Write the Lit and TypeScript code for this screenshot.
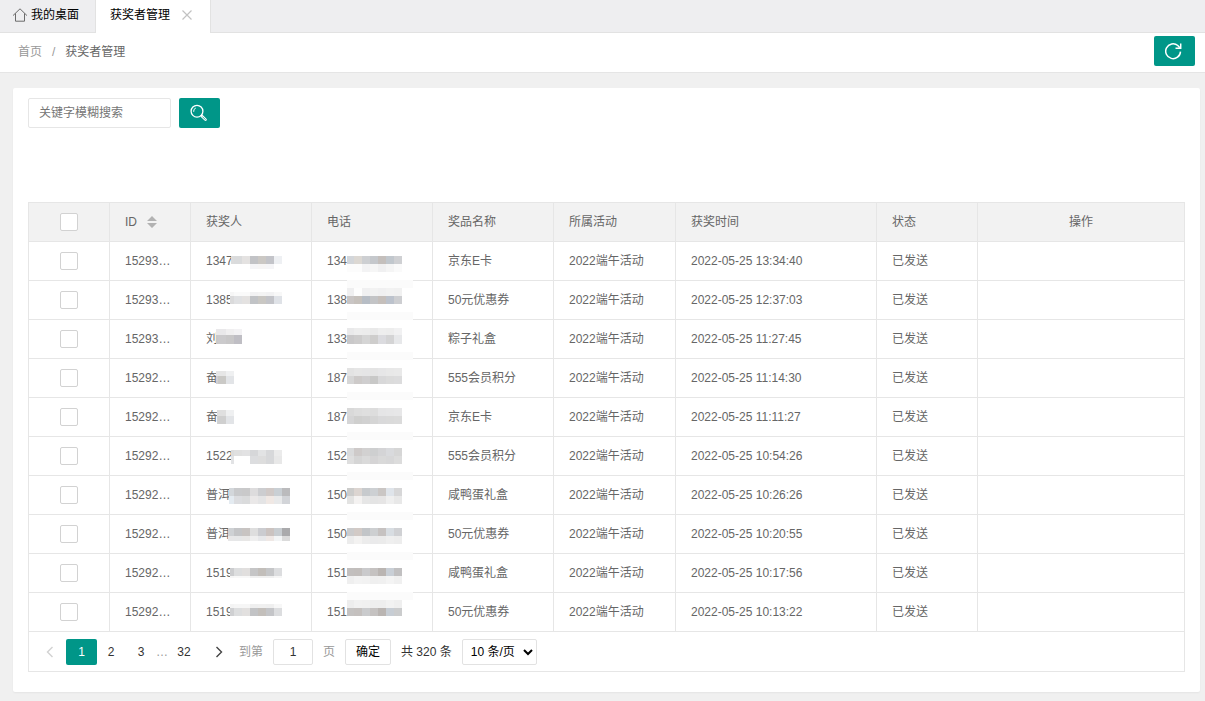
import { LitElement, html, svg, css, nothing } from "lit";
import { customElement, state } from "lit/decorators.js";

/** One horizontal band of masking blocks; "" leaves a gap. */
interface Band {
  y: number;
  h: number;
  fill: string[];
}

interface Mask {
  start: number;
  bands: Band[];
}

interface Winner {
  id: string;
  name: string;
  nameMask: Mask;
  phone: string;
  phoneMask: Mask;
  veil?: number;
  prize: string;
  time: string;
}

const BLOCK = 8;

const mask = (start: number, ...bands: [number, number, string][]): Mask => ({
  start,
  bands: bands.map(([y, h, list]) => ({
    y,
    h,
    fill: list.split(" ").map((c) => (c === "-" ? "" : "#" + c)),
  })),
});

const winners: Winner[] = [
  {
    id: "15293401", name: "1347", phone: "134", prize: "京东E卡", time: "2022-05-25 13:34:40", veil: 38,
    nameMask: mask(40, [14, 8, "dcdcdc dadbdc e4e2e1 c2c3c6 cbc8c4 c3c4c9 eef0f3"], [22, 5, "- - - f5f5f7 f6f5f5 f5f5f7 -"]),
    phoneMask: mask(35, [14, 8, "d3d6da dcd8d3 cdcfd2 c5c8cc c4bfbc c1c7cd cfd0d3"], [22, 8, "fcfcfc fcfcfc f3f3f4 f6f6f6 f0f0f1 f5f5f5 fafafa"]),
  },
  {
    id: "15293388", name: "1385", phone: "138", prize: "50元优惠券", time: "2022-05-25 12:37:03", veil: 31,
    nameMask: mask(39, [11, 4, "f6f6f6 fafafa fafafa f2f2f3 f4f4f4 f2f2f3 f8f8f8"], [15, 8, "dadadb e0e1e3 e4e2e1 c1c3c6 c9c7c3 c3c4c9 dfe2e7"]),
    phoneMask: mask(35, [7, 8, "efeff0 fdfdfd f0f0f1 f2f2f2 f0f0f1 f2f2f2 f1f1f1"], [15, 8, "c9c5c4 c6c1bc b7bdc5 c3c4c6 c5bfbb bcc2cc cdced1"]),
  },
  {
    id: "15293120", name: "刘", phone: "133", prize: "粽子礼盒", time: "2022-05-25 11:27:45", veil: 32,
    nameMask: mask(25, [9, 6, "e9e8ea e9e8ea f0eff0 f3f2f4"], [15, 9, "c9c8ca cbcacc c8c7c8 bfbec4"]),
    phoneMask: mask(35, [8, 7, "e9e9ea ededed ececec e9e9e9 eeeeee ededed f1f1f2"], [15, 9, "c9c8c9 cdcccc d5d5d5 cecdcc dbdbdf d4d4d5 e7e8ea"]),
  },
  {
    id: "15292987", name: "奋", phone: "187", prize: "555会员积分", time: "2022-05-25 11:14:30", veil: 33,
    nameMask: mask(25, [12, 5, "e6e6e7 e6e6e6 eff0f1"], [17, 8, "d2d1d3 cac9c6 e2e4e7"]),
    phoneMask: mask(35, [9, 8, "e3e3e3 e6e6e6 e5e5e6 e4e4e4 e6e6e7 e8e8e8 e9e9e9"], [17, 8, "d6d6d6 cdcac9 cfcecf c8c8c7 d8d8d9 dbdbdb dcdcdd"]),
  },
  {
    id: "15292951", name: "奋", phone: "187", prize: "京东E卡", time: "2022-05-25 11:11:27", veil: 34,
    nameMask: mask(26, [12, 6, "dddddd dfdfdf eff0f1"], [18, 8, "d2d2d2 cfcfcf e2e4e7"]),
    phoneMask: mask(35, [10, 8, "d9d9d9 dddddd dfdfdf dddddd e5e5e6 e6e6e7 e7e7e8"], [18, 8, "d5d5d6 cfcfce d1d1d1 d5d5d5 d9d9da dadada dbdbdb"]),
  },
  {
    id: "15292840", name: "1522", phone: "152", prize: "555会员积分", time: "2022-05-25 10:54:26", veil: 35,
    nameMask: mask(40, [13, 6, "dcdddd e0e0e0 e2e2e3 d6d7d9 e2e3e4 d7d8da ebebeb"], [19, 8, "e2e3e5 ffffff ffffff dcdddf dddddd d7d8da e8e8e8"]),
    phoneMask: mask(35, [11, 8, "d9dadb cecac9 d2d1d1 cecfd0 d4d4d6 d9dadd d6d6d6"], [19, 8, "dedede d5d5d5 dadada d5d4d5 d9d9d9 d7d7d8 dcdcdc"]),
  },
  {
    id: "15292733", name: "普洱", phone: "150", prize: "咸鸭蛋礼盒", time: "2022-05-25 10:26:26", veil: 36,
    nameMask: mask(38, [12, 8, "d3d7db c9cacc c9c9ca dddcdd cccdd0 d0c9c7 c9cfd4 bbbbbd"], [20, 8, "e4ebf1 dcdde0 dadbdc eae8e8 e4e4e5 f0e8e4 e8e9ea d2d4d8"]),
    phoneMask: mask(35, [12, 8, "cccccb dcd5d1 c7cacd cdd0d3 cac6c4 dfe4ea d7d7d8"], [20, 8, "e3e3e2 f4f2f1 e6e6e6 e4e4e4 e6e5e5 efefef e8e8e8"]),
  },
  {
    id: "15292716", name: "普洱", phone: "150", prize: "50元优惠券", time: "2022-05-25 10:20:55", veil: 37,
    nameMask: mask(37, [13, 8, "ced1d4 c4c5c7 c8c4c2 dedede cbccd0 cbc3c0 c8cdd1 aaaaac"], [21, 5, "e7e7e8 e6e7e8 e8e7e6 efefef e7e8ea efe8e5 f3f5f6 dbdbdb"]),
    phoneMask: mask(35, [13, 8, "cbcbcc d2cac6 c2c5c8 cdcfd1 c6c2c1 d8dde2 d0d1d4"], [21, 8, "ececec f3f2f1 ececec eaeaeb ebebeb efefef ededed"]),
  },
  {
    id: "15292694", name: "1519", phone: "151", prize: "咸鸭蛋礼盒", time: "2022-05-25 10:17:56", veil: 38,
    nameMask: mask(39, [14, 8, "cccdcf dddedf e1dfde c5c5c6 c2beba c5c6c8 dcdddf"], [22, 2, "f6f6f6 f8f8f8 f8f8f8 f0f0f0 f0f0f0 f0f0f0 f6f6f6"]),
    phoneMask: mask(35, [14, 8, "c2bfbe c2bebc cacacc c5c2c1 bab5b2 c9cfd6 c1c0c1"], [22, 8, "efefef f3f3f3 f2f2f2 efefef f0f0f0 f4f4f4 f0f0f0"]),
  },
  {
    id: "15292671", name: "1519", phone: "151", prize: "50元优惠券", time: "2022-05-25 10:13:22",
    nameMask: mask(39, [11, 4, "f4f4f4 f6f6f6 f6f6f6 efefef f0f0f0 efefef f7f7f7"], [15, 8, "cfd0d2 dddedf e2e0df c2c3c5 c3bfbb c4c5c8 dcdddf"]),
    phoneMask: mask(35, [7, 8, "ededed f1f1f1 f0f0f0 eeeeee eeeeee f2f2f2 efefef"], [15, 8, "c4c2c1 c4c0be cacbcd c5c2c1 bab5b2 c7cdd4 cbcccd"]),
  },
];

@customElement("privacy-mask")
export class PrivacyMask extends LitElement {
  static properties = {
    mask: { attribute: false },
    grid: { type: Number },
    veil: { attribute: false },
  };

  declare mask: Mask;
  declare grid: number;
  declare veil: number | undefined;

  static styles = css`
    :host {
      position: absolute;
      left: 0;
      top: 0;
      pointer-events: none;
    }
    svg {
      display: block;
      overflow: visible;
    }
  `;

  render() {
    const { start, bands } = this.mask;
    const first = start + BLOCK - ((start - this.grid) % BLOCK);
    return html`<svg width="110" height="38" shape-rendering="crispEdges" aria-hidden="true">
      ${this.veil === undefined
        ? nothing
        : svg`<rect x="35" y=${this.veil} width="66" height="8" fill="#fbfbfb" />`}
      ${bands.map((band) =>
        band.fill.map((fill, i) => {
          const x = i === 0 ? start : first + (i - 1) * BLOCK;
          const w = i === 0 ? first - start : BLOCK;
          return fill ? svg`<rect x=${x} y=${band.y} width=${w} height=${band.h} fill=${fill} />` : nothing;
        })
      )}
    </svg>`;
  }
}

@customElement("app-root")
export class AppRoot extends LitElement {
  @state() private page = 1;

  static styles = css`
    :host {
      display: flex;
      flex-direction: column;
      min-height: 100vh;
      box-sizing: border-box;
      background: #f0f0f0;
      color: #666;
      font: 12px/20px "Liberation Sans", "Noto Sans CJK SC", sans-serif;
    }
    * {
      box-sizing: border-box;
    }
    a {
      color: inherit;
      text-decoration: none;
    }
    button,
    input,
    select {
      font: inherit;
      margin: 0;
    }
    button {
      cursor: pointer;
    }
    .tabs {
      display: flex;
      height: 33px;
      background: #eeeef0;
      border-bottom: 1px solid #e2e2e2;
      color: #000;
    }
    .tab {
      display: flex;
      align-items: center;
      height: 33px;
      padding: 0 16px 4px 13px;
      border-right: 1px solid #e2e2e2;
    }
    .tab.home {
      gap: 4px;
      height: 32px;
      padding-bottom: 3px;
    }
    .tab.active {
      gap: 10px;
      padding-left: 14px;
      background: #fff;
    }
    .close {
      display: flex;
      padding: 0;
      border: 0;
      background: none;
    }
    .crumbs {
      display: flex;
      align-items: center;
      justify-content: space-between;
      height: 40px;
      padding: 0 10px 3px 18px;
      background: #fff;
      border-bottom: 1px solid #e5e5e5;
    }
    .trail {
      display: flex;
      gap: 10px;
      padding-top: 2px;
    }
    .muted {
      color: #999;
    }
    .primary {
      display: flex;
      align-items: center;
      justify-content: center;
      width: 41px;
      height: 30px;
      padding: 0 2px 0 0;
      border: 0;
      border-radius: 2px;
      background: #009688;
    }
    .card {
      margin: 15px 5px 8px 13px;
      padding: 10px 15px 20px;
      background: #fff;
      border-radius: 2px;
      box-shadow: 0 1px 2px rgba(0, 0, 0, 0.05);
    }
    .search {
      display: flex;
      gap: 8px;
      margin-bottom: 74px;
    }
    .keyword {
      width: 143px;
      height: 30px;
      padding: 0 10px;
      border: 1px solid #e6e6e6;
      border-radius: 2px;
      outline: none;
    }
    .keyword::placeholder {
      color: #757575;
      opacity: 1;
    }
    .grid {
      border: 1px solid #e6e6e6;
    }
    table {
      width: 100%;
      table-layout: fixed;
      border-collapse: separate;
      border-spacing: 0;
    }
    th,
    td {
      position: relative;
      height: 39px;
      padding: 0 15px;
      border: solid #e6e6e6;
      border-width: 0 1px 1px 0;
      font-weight: 400;
      text-align: left;
      white-space: nowrap;
    }
    th {
      background: #f2f2f2;
    }
    th:last-child,
    td:last-child {
      border-right: 0;
      text-align: center;
    }
    .w-check,
    .w-id {
      width: 81px;
    }
    .w-text {
      width: 121px;
    }
    .w-event {
      width: 122px;
    }
    .w-time {
      width: 201px;
    }
    .w-status {
      width: 101px;
    }
    .check {
      display: block;
      appearance: none;
      width: 18px;
      height: 18px;
      margin: 0 auto;
      border: 1px solid #d2d2d2;
      border-radius: 2px;
      background: #fff;
    }
    .check:checked {
      border-color: #009688;
      background: #009688;
    }
    .clip {
      overflow: hidden;
      text-overflow: ellipsis;
    }
    .sort {
      display: flex;
      align-items: center;
      gap: 10px;
    }
    .pager {
      display: flex;
      align-items: center;
      height: 39px;
      padding: 0 7px;
      color: #333;
    }
    .num {
      min-width: 30px;
      height: 26px;
      padding: 0 8px;
      border: 0;
      border-radius: 2px;
      background: none;
      color: #333;
      line-height: 26px;
      text-align: center;
    }
    .num.on {
      min-width: 31px;
      background: #009688;
      color: #fff;
    }
    .num.on + .num {
      margin-left: -1px;
    }
    .num.arrow {
      display: flex;
      align-items: center;
      justify-content: center;
      padding: 0 10px 0 8px;
    }
    .dots {
      width: 12px;
      color: #999;
      text-align: center;
    }
    .last {
      margin: 0 6px 0 1px;
    }
    .jump {
      display: flex;
      align-items: center;
      gap: 10px;
      margin-left: 4px;
      color: #999;
    }
    .goto {
      width: 40px;
      height: 26px;
      padding: 0;
      border: 1px solid #e2e2e2;
      border-radius: 2px;
      color: #333;
      text-align: center;
    }
    .ok {
      width: 46px;
      height: 26px;
      padding: 0;
      border: 1px solid #e2e2e2;
      border-radius: 2px;
      background: #fff;
      color: #000;
    }
    .total {
      margin: 0 10px;
    }
    .size {
      width: 75px;
      height: 26px;
      padding: 0 4px;
      border: 1px solid #e2e2e2;
      border-radius: 2px;
      background: #fff;
      color: #000;
    }
  `;

  private go(page: number) {
    this.page = page;
  }

  private row(w: Winner) {
    return html`<tr>
      <td><input class="check" type="checkbox" aria-label=${"选择 " + w.id} /></td>
      <td class="clip">${w.id}</td>
      <td>${w.name}<privacy-mask .mask=${w.nameMask} .grid=${3}></privacy-mask></td>
      <td>${w.phone}<privacy-mask .mask=${w.phoneMask} .grid=${2} .veil=${w.veil}></privacy-mask></td>
      <td>${w.prize}</td>
      <td>2022端午活动</td>
      <td>${w.time}</td>
      <td>已发送</td>
      <td></td>
    </tr>`;
  }

  private num(n: number, extra = "") {
    return html`<button class="num ${extra} ${this.page === n ? "on" : ""}" @click=${() => this.go(n)}>${n}</button>`;
  }

  render() {
    return html`
      <nav class="tabs">
        <a class="tab home" href="#home">
          <svg width="14" height="14" viewBox="0 0 14 14" fill="none" stroke="#6b6b6b" stroke-width="1" aria-hidden="true">
            <path d="M.3 7.300 7 .8l6.700 6.500M2.500 5.800V13.200h9V5.800" stroke-linejoin="round" stroke-linecap="round" />
          </svg>
          <span>我的桌面</span>
        </a>
        <div class="tab active">
          <a href="#winners">获奖者管理</a>
          <button class="close" aria-label="关闭">
            <svg width="14" height="14" viewBox="0 0 14 14" stroke="#c2c2c2" stroke-width="1.200" aria-hidden="true">
              <path d="M2.500 2.500l9 9M11.500 2.500l-9 9" />
            </svg>
          </button>
        </div>
      </nav>
      <header class="crumbs">
        <div class="trail">
          <a class="muted" href="#home">首页</a><span class="muted">/</span><span>获奖者管理</span>
        </div>
        <button class="primary" aria-label="刷新">
          <svg width="17" height="18" viewBox="0 0 17 18" fill="none" stroke="#fff" stroke-width="1.500" aria-hidden="true">
            <path d="M15.500 9.600A7.400 7.400 0 1 1 12.800 3.500l2 2.200" />
            <path d="M15.700 1.400v4.900h-5.200" />
          </svg>
        </button>
      </header>
      <main class="card">
        <form class="search" @submit=${(e: Event) => e.preventDefault()}>
          <input class="keyword" type="text" placeholder="关键字模糊搜索" aria-label="关键字模糊搜索" />
          <button class="primary" aria-label="搜索">
            <svg width="17" height="18" viewBox="0 0 17 18" fill="none" stroke="#fff" aria-hidden="true">
              <circle cx="7" cy="7.200" r="5.900" stroke-width="1.300" />
              <path d="M3.700 7.800A3.500 3.500 0 0 1 5.800 4" stroke-width="1" />
              <path d="M11.800 12l3.700 3.700" stroke-width="2.600" stroke-linecap="round" />
              <path d="M12.600 12.800l2.700 2.700" stroke="#009688" stroke-width=".8" stroke-linecap="round" />
            </svg>
          </button>
        </form>
        <section class="grid">
          <table>
            <colgroup>
              <col class="w-check" />
              <col class="w-id" />
              <col class="w-text" />
              <col class="w-text" />
              <col class="w-text" />
              <col class="w-event" />
              <col class="w-time" />
              <col class="w-status" />
              <col />
            </colgroup>
            <thead>
              <tr>
                <th><input class="check" type="checkbox" aria-label="全选" /></th>
                <th>
                  <span class="sort">ID
                    <svg width="10" height="12" viewBox="0 0 10 12" fill="#b2b2b2" aria-hidden="true">
                      <path d="M0 5 5 0l5 5zM0 7h10l-5 5z" />
                    </svg>
                  </span>
                </th>
                <th>获奖人</th>
                <th>电话</th>
                <th>奖品名称</th>
                <th>所属活动</th>
                <th>获奖时间</th>
                <th>状态</th>
                <th>操作</th>
              </tr>
            </thead>
            <tbody>
              ${winners.map((w) => this.row(w))}
            </tbody>
          </table>
          <div class="pager">
            <button class="num arrow" aria-label="上一页" disabled>
              <svg width="8" height="12" viewBox="0 0 8 12" fill="none" stroke="#d2d2d2" stroke-width="1.400" aria-hidden="true">
                <path d="M6.500 1 1.500 6l5 5" />
              </svg>
            </button>
            ${this.num(1)}${this.num(2)}${this.num(3)}
            <span class="dots">…</span>
            ${this.num(32, "last")}
            <button class="num arrow" aria-label="下一页" @click=${() => this.go(this.page + 1)}>
              <svg width="8" height="12" viewBox="0 0 8 12" fill="none" stroke="#444" stroke-width="1.400" aria-hidden="true">
                <path d="M1.500 1l5 5-5 5" />
              </svg>
            </button>
            <div class="jump">
              <label for="goto">到第</label>
              <input class="goto" id="goto" type="text" inputmode="numeric" .value=${String(this.page)} />
              <span>页</span>
              <button class="ok">确定</button>
            </div>
            <span class="total">共 320 条</span>
            <select class="size" aria-label="每页条数">
              <option>10 条/页</option>
              <option>20 条/页</option>
              <option>50 条/页</option>
            </select>
          </div>
        </section>
      </main>
    `;
  }
}
